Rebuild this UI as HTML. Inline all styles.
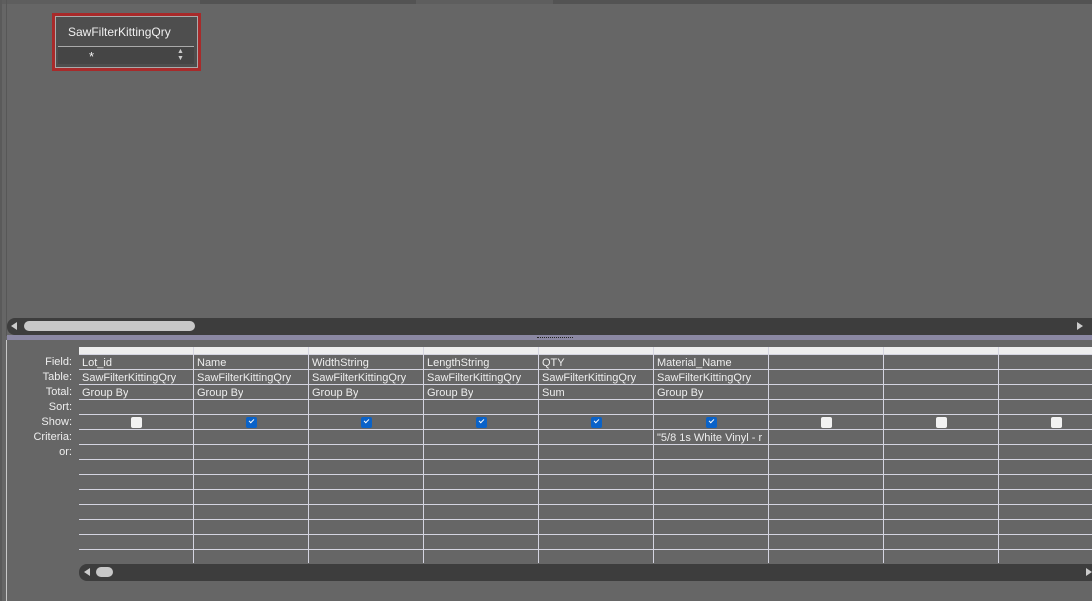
<!DOCTYPE html>
<html><head><style>
*{margin:0;padding:0;box-sizing:border-box}
body{width:1092px;height:601px;background:#666;position:relative;overflow:hidden;font-family:"Liberation Sans",sans-serif;color:#e8e8e8}
.a{position:absolute}
.lbl{position:absolute;right:1020px;font-size:11px;text-align:right;color:#eee}
.cell{position:absolute;font-size:11px;color:#eee;white-space:nowrap;overflow:hidden}
.cb{position:absolute;width:11px;height:11px;border-radius:2px;background:#f2f2f2}
.cb.on{background:#0a62c8}
.cb.on::after{content:"";position:absolute;left:3px;top:2px;width:4px;height:2px;border-left:1px solid #fff;border-bottom:1px solid #fff;transform:rotate(-45deg)}
</style></head><body>
<div class="a" style="left:0;top:0;width:1092px;height:4px;background:#5e5e5e"></div>
<div class="a" style="left:200px;top:0;width:216px;height:4px;background:#535353"></div>
<div class="a" style="left:553px;top:0;width:539px;height:4px;background:#535353"></div>
<div class="a" style="left:0;top:0;width:2px;height:601px;background:#5a5a5a"></div>
<div class="a" style="left:6px;top:0;width:1px;height:336px;background:#575757"></div>
<div class="a" style="left:6px;top:340px;width:1px;height:261px;background:#c8c8c8"></div>

<div class="a" style="left:52px;top:13px;width:149px;height:58px;border:3px solid #a82a2a;background:#666"></div>
<div class="a" style="left:55px;top:16px;width:143px;height:52px;border:1px solid #aaa;background:#4e4e4e"></div>
<div class="a" style="left:68px;top:25px;font-size:12px;color:#f0f0f0">SawFilterKittingQry</div>
<div class="a" style="left:58px;top:46px;width:136px;height:1px;background:#aaa"></div>
<div class="a" style="left:58px;top:47px;width:136px;height:17px;background:#454545"></div>
<div class="a" style="left:89px;top:49px;font-size:13px;color:#f4f4f4">*</div>
<div class="a" style="left:177px;top:48px;font-size:7px;color:#ccc;line-height:7px">▲<br>▼</div>

<div class="a" style="left:7px;top:318px;width:1085px;height:17px;background:#3d3d3d;border-radius:8px 0 0 8px"></div>
<div class="a" style="left:11px;top:322px;width:0;height:0;border-top:4px solid transparent;border-bottom:4px solid transparent;border-right:6px solid #ccc"></div>
<div class="a" style="left:24px;top:321px;width:171px;height:10px;background:#c8c8c8;border-radius:5px"></div>
<div class="a" style="left:1077px;top:322px;width:0;height:0;border-top:4px solid transparent;border-bottom:4px solid transparent;border-left:6px solid #ccc"></div>
<div class="a" style="left:7px;top:335px;width:1085px;height:5px;background:#8b88a3"></div>
<div class="a" style="left:537px;top:337px;width:36px;height:1px;border-top:1px dotted #222"></div>

<div class="a" style="left:79px;top:347px;width:1013px;height:7px;background:#eee"></div>
<svg class="a" style="left:0;top:0" width="1092" height="601">
<g stroke="#d4d4e0" stroke-width="1">
<line x1="79" y1="354.5" x2="1092" y2="354.5"/><line x1="79" y1="369.5" x2="1092" y2="369.5"/><line x1="79" y1="384.5" x2="1092" y2="384.5"/><line x1="79" y1="399.5" x2="1092" y2="399.5"/><line x1="79" y1="414.5" x2="1092" y2="414.5"/><line x1="79" y1="429.5" x2="1092" y2="429.5"/><line x1="79" y1="444.5" x2="1092" y2="444.5"/><line x1="79" y1="459.5" x2="1092" y2="459.5"/><line x1="79" y1="474.5" x2="1092" y2="474.5"/><line x1="79" y1="489.5" x2="1092" y2="489.5"/><line x1="79" y1="504.5" x2="1092" y2="504.5"/><line x1="79" y1="519.5" x2="1092" y2="519.5"/><line x1="79" y1="534.5" x2="1092" y2="534.5"/><line x1="79" y1="549.5" x2="1092" y2="549.5"/>
<line x1="193.5" y1="347" x2="193.5" y2="563"/><line x1="308.5" y1="347" x2="308.5" y2="563"/><line x1="423.5" y1="347" x2="423.5" y2="563"/><line x1="538.5" y1="347" x2="538.5" y2="563"/><line x1="653.5" y1="347" x2="653.5" y2="563"/><line x1="768.5" y1="347" x2="768.5" y2="563"/><line x1="883.5" y1="347" x2="883.5" y2="563"/><line x1="998.5" y1="347" x2="998.5" y2="563"/>
</g></svg>

<div class="lbl" style="top:356px">Field:</div>
<div class="lbl" style="top:371px">Table:</div>
<div class="lbl" style="top:386px">Total:</div>
<div class="lbl" style="top:401px">Sort:</div>
<div class="lbl" style="top:416px">Show:</div>
<div class="lbl" style="top:431px">Criteria:</div>
<div class="lbl" style="top:446px">or:</div>

<div class="cell" style="left:82px;top:357px">Lot_id</div>
<div class="cell" style="left:82px;top:372px">SawFilterKittingQry</div>
<div class="cell" style="left:82px;top:387px">Group By</div>
<div class="cell" style="left:197px;top:357px">Name</div>
<div class="cell" style="left:197px;top:372px">SawFilterKittingQry</div>
<div class="cell" style="left:197px;top:387px">Group By</div>
<div class="cell" style="left:312px;top:357px">WidthString</div>
<div class="cell" style="left:312px;top:372px">SawFilterKittingQry</div>
<div class="cell" style="left:312px;top:387px">Group By</div>
<div class="cell" style="left:427px;top:357px">LengthString</div>
<div class="cell" style="left:427px;top:372px">SawFilterKittingQry</div>
<div class="cell" style="left:427px;top:387px">Group By</div>
<div class="cell" style="left:542px;top:357px">QTY</div>
<div class="cell" style="left:542px;top:372px">SawFilterKittingQry</div>
<div class="cell" style="left:542px;top:387px">Sum</div>
<div class="cell" style="left:657px;top:357px">Material_Name</div>
<div class="cell" style="left:657px;top:372px">SawFilterKittingQry</div>
<div class="cell" style="left:657px;top:387px">Group By</div>
<div class="cell" style="left:657px;top:432px;width:111px">"5/8 1s White Vinyl - r</div>

<div class="cb" style="left:131px;top:417px"></div>
<div class="cb on" style="left:246px;top:417px"></div>
<div class="cb on" style="left:361px;top:417px"></div>
<div class="cb on" style="left:476px;top:417px"></div>
<div class="cb on" style="left:591px;top:417px"></div>
<div class="cb on" style="left:706px;top:417px"></div>
<div class="cb" style="left:821px;top:417px"></div>
<div class="cb" style="left:936px;top:417px"></div>
<div class="cb" style="left:1051px;top:417px"></div>

<div class="a" style="left:79px;top:564px;width:1013px;height:17px;background:#3d3d3d;border-radius:8px 0 0 8px"></div>
<div class="a" style="left:84px;top:568px;width:0;height:0;border-top:4px solid transparent;border-bottom:4px solid transparent;border-right:6px solid #ccc"></div>
<div class="a" style="left:96px;top:567px;width:17px;height:10px;background:#c8c8c8;border-radius:5px"></div>
<div class="a" style="left:1086px;top:568px;width:0;height:0;border-top:4px solid transparent;border-bottom:4px solid transparent;border-left:6px solid #ccc"></div>
</body></html>
